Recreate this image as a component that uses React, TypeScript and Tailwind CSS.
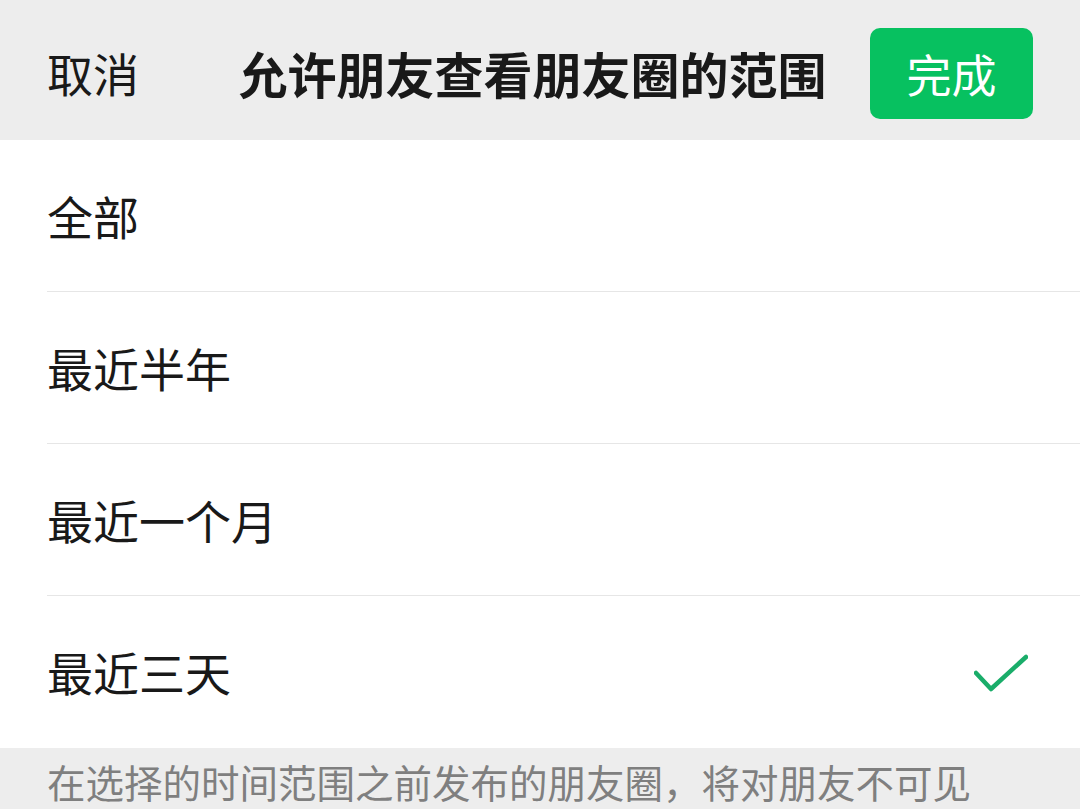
import React from 'react';

const options = ['全部', '最近半年', '最近一个月', '最近三天'];

const App: React.FC = () => {
  const selected = 3;

  return (
    <div
      className="w-[1080px] h-[809px] overflow-hidden bg-[#ededed] text-[#191919]"
      style={{ fontFamily: '"Noto Sans CJK SC", "Noto Sans", sans-serif' }}
    >
      {/* Header */}
      <header className="h-[140px] flex items-center justify-between pl-[47px] pr-[47px]">
        <span className="text-[46px] leading-none pt-[4px]">取消</span>
        <h1 className="text-[49px] leading-none font-bold ml-[56px] pt-[4px]">
          允许朋友查看朋友圈的范围
        </h1>
        <button className="w-[163px] h-[91px] mt-[6px] rounded-[10px] bg-[#07c160] text-white text-[45px] leading-none flex items-center justify-center">
          完成
        </button>
      </header>

      {/* Options */}
      <div className="bg-white">
        {options.map((label, i) => (
          <div key={label} className="pl-[47px]">
            <div
              className={
                'h-[152px] flex items-center justify-between pr-[52px] ' +
                (i < options.length - 1 ? 'border-b border-[#e6e6e6]' : '')
              }
            >
              <span className="text-[46px] leading-none pb-[2px]">{label}</span>
              {i === selected && (
                <svg width="54" height="40" viewBox="0 0 54 40" fill="none" className="mt-[4px]">
                  <path
                    d="M2 19 L17 35 L52 3"
                    stroke="#1aad6a"
                    strokeWidth="4.5"
                    strokeLinecap="round"
                    strokeLinejoin="round"
                  />
                </svg>
              )}
            </div>
          </div>
        ))}
      </div>

      {/* Footer note */}
      <p className="pl-[47px] pt-[14px] text-[38.5px] leading-none text-[#7f7f7f]">
        在选择的时间范围之前发布的朋友圈，将对朋友不可见
      </p>
    </div>
  );
};

export default App;
